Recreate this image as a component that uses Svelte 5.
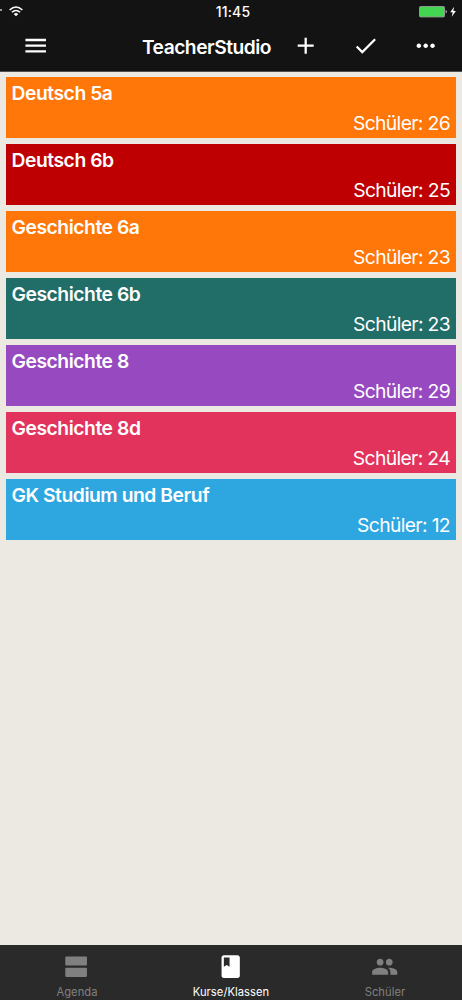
<script>
  const courses = [
    { name: 'Deutsch 5a', students: 26, color: '#ff7609' },
    { name: 'Deutsch 6b', students: 25, color: '#be0003' },
    { name: 'Geschichte 6a', students: 23, color: '#ff7609' },
    { name: 'Geschichte 6b', students: 23, color: '#216d68' },
    { name: 'Geschichte 8', students: 29, color: '#974abf' },
    { name: 'Geschichte 8d', students: 24, color: '#e2335c' },
    { name: 'GK Studium und Beruf', students: 12, color: '#2ea6df' },
  ];

  const tabs = [
    {
      label: 'Agenda',
      icon: 'M20 13H3c-.55 0-1 .45-1 1v6c0 .55.45 1 1 1h17c.55 0 1-.45 1-1v-6c0-.55-.45-1-1-1zm0-10H3c-.55 0-1 .45-1 1v6c0 .55.45 1 1 1h17c.55 0 1-.45 1-1V4c0-.55-.45-1-1-1z',
    },
    {
      label: 'Kurse/Klassen',
      icon: 'M18 2H6c-1.1 0-2 .9-2 2v16c0 1.1.9 2 2 2h12c1.1 0 2-.9 2-2V4c0-1.1-.9-2-2-2zM6 4h5v8l-2.5-1.5L6 12V4z',
    },
    {
      label: 'Schüler',
      icon: 'M16 11c1.66 0 2.99-1.34 2.99-3S17.66 5 16 5s-3 1.34-3 3 1.34 3 3 3zm-8 0c1.66 0 2.99-1.34 2.99-3S9.66 5 8 5 5 6.34 5 8s1.34 3 3 3zm0 2c-2.33 0-7 1.17-7 3.5V19h14v-2.5c0-2.33-4.67-3.5-7-3.5zm8 0c-.29 0-.62.02-.97.05 1.16.84 1.97 1.97 1.97 3.45V19h6v-2.5c0-2.33-4.67-3.5-7-3.5z',
    },
  ];

  let active = $state(1);
</script>

<div class="screen">
  <header>
    <div class="status">
      <span class="signal"></span>
      <svg class="wifi" viewBox="0 0 14 11">
        <g fill="none" stroke="#fff" stroke-width="1.5">
          <path d="M.6 4Q7-2 13.4 4" />
          <path d="M2.9 6.3Q7 2.6 11.1 6.3" />
        </g>
        <path d="M4.8 8Q7 6 9.2 8L7 10.3z" fill="#fff" />
      </svg>
      <span class="time">11:45</span>
      <svg class="battery" viewBox="0 0 38 12">
        <rect x=".5" y=".5" width="25" height="10.4" rx="1" fill="#43d551" stroke="#8d9a8e" />
        <path d="M26.6 4q1.4.3 1.4 1.7t-1.4 1.7z" fill="#aaa" />
        <path d="M35.2.8l-4 5.4h2.5l-1 4.6 4.2-5.8h-2.6z" fill="#fff" />
      </svg>
    </div>
    <div class="toolbar">
      <button class="menu" aria-label="Menü">
        <svg viewBox="0 0 24 24"><path d="M3 18h18v-2H3v2zm0-5h18v-2H3v2zm0-7v2h18V6H3z" /></svg>
      </button>
      <h1>TeacherStudio</h1>
      <button aria-label="Hinzufügen">
        <svg viewBox="0 0 24 24"><path d="M19 13h-6v6h-2v-6H5v-2h6V5h2v6h6v2z" /></svg>
      </button>
      <button aria-label="Fertig">
        <svg viewBox="0 0 24 24"><path d="M9 16.17L4.83 12l-1.42 1.41L9 19 21 7l-1.41-1.41z" /></svg>
      </button>
      <button aria-label="Mehr">
        <svg viewBox="0 0 24 24"><path d="M6 10c-1.1 0-2 .9-2 2s.9 2 2 2 2-.9 2-2-.9-2-2-2zm12 0c-1.1 0-2 .9-2 2s.9 2 2 2 2-.9 2-2-.9-2-2-2zm-6 0c-1.1 0-2 .9-2 2s.9 2 2 2 2-.9 2-2-.9-2-2-2z" /></svg>
      </button>
    </div>
  </header>

  <main>
    {#each courses as course}
      <div class="course" style="background-color: {course.color}">
        <div class="name"><span>{course.name}</span></div>
        <div class="students"><span>Schüler: {course.students}</span></div>
      </div>
    {/each}
  </main>

  <nav>
    {#each tabs as tab, i}
      <button class="tab" class:active={active === i} onclick={() => (active = i)}>
        <svg viewBox="0 0 24 24"><path d={tab.icon} /></svg>
        <span>{tab.label}</span>
      </button>
    {/each}
  </nav>
</div>

<style>
  :global(body) {
    margin: 0;
  }
  .screen {
    display: flex;
    flex-direction: column;
    height: 1000px;
    overflow: hidden;
    background: #ece9e2;
    color: #fff;
    font-family: Inter, 'Liberation Sans', sans-serif;
  }
  header {
    box-sizing: border-box;
    height: 72px;
    background: #131313;
    border-bottom: 1px solid #54504d;
  }
  .status {
    display: flex;
    align-items: center;
    height: 23px;
  }
  .signal {
    width: 2px;
    height: 2px;
    margin-right: 7px;
    margin-top: -3px;
    background: #999;
  }
  .wifi {
    width: 14px;
    height: 11px;
    margin-top: -1px;
  }
  .time {
    width: 60px;
    margin-left: 180px;
    font-size: 14px;
    font-weight: 500;
    line-height: 23px;
    text-align: center;
    white-space: nowrap;
    letter-spacing: 0.2px;
  }
  .battery {
    width: 38px;
    height: 12px;
    margin-left: auto;
    margin-right: 5px;
  }
  .toolbar {
    display: flex;
    align-items: center;
    height: 46px;
    padding-right: 6px;
  }
  button {
    display: flex;
    align-items: center;
    justify-content: center;
    width: 60.2px;
    padding: 0;
    border: 0;
    background: none;
    color: inherit;
    font: inherit;
  }
  svg {
    display: block;
    flex: none;
    fill: currentColor;
  }
  button svg {
    width: 27.4px;
    height: 27.4px;
  }
  .menu {
    width: 71.6px;
  }
  h1 {
    flex: 1;
    margin: 0 4.5px 0 0;
    padding-top: 2px;
    font-size: 19.2px;
    font-weight: 600;
    line-height: 46px;
    letter-spacing: -0.48px;
    text-align: right;
    white-space: nowrap;
  }
  main {
    display: flex;
    flex: 1;
    flex-direction: column;
    gap: 5.95px;
    padding: 5px 6px;
  }
  .course {
    box-sizing: border-box;
    height: 61px;
    padding: 2px 5.5px 0;
  }
  .name {
    font-size: 19.3px;
    font-weight: 600;
    line-height: 29px;
    letter-spacing: -0.45px;
  }
  .students {
    padding-right: 0.5px;
    font-size: 19.3px;
    line-height: 30px;
    letter-spacing: -0.64px;
    text-align: right;
  }
  nav {
    display: grid;
    grid-template-columns: repeat(3, 1fr);
    box-sizing: border-box;
    height: 55px;
    background: #2a2a2a;
  }
  .tab {
    flex-direction: column;
    justify-content: flex-start;
    width: auto;
    padding-top: 8px;
    color: #808080;
  }
  .tab span {
    margin-top: 4px;
    font-size: 11.2px;
    line-height: 16px;
    letter-spacing: 0.05px;
  }
  .tab.active {
    color: #fff;
  }
</style>
